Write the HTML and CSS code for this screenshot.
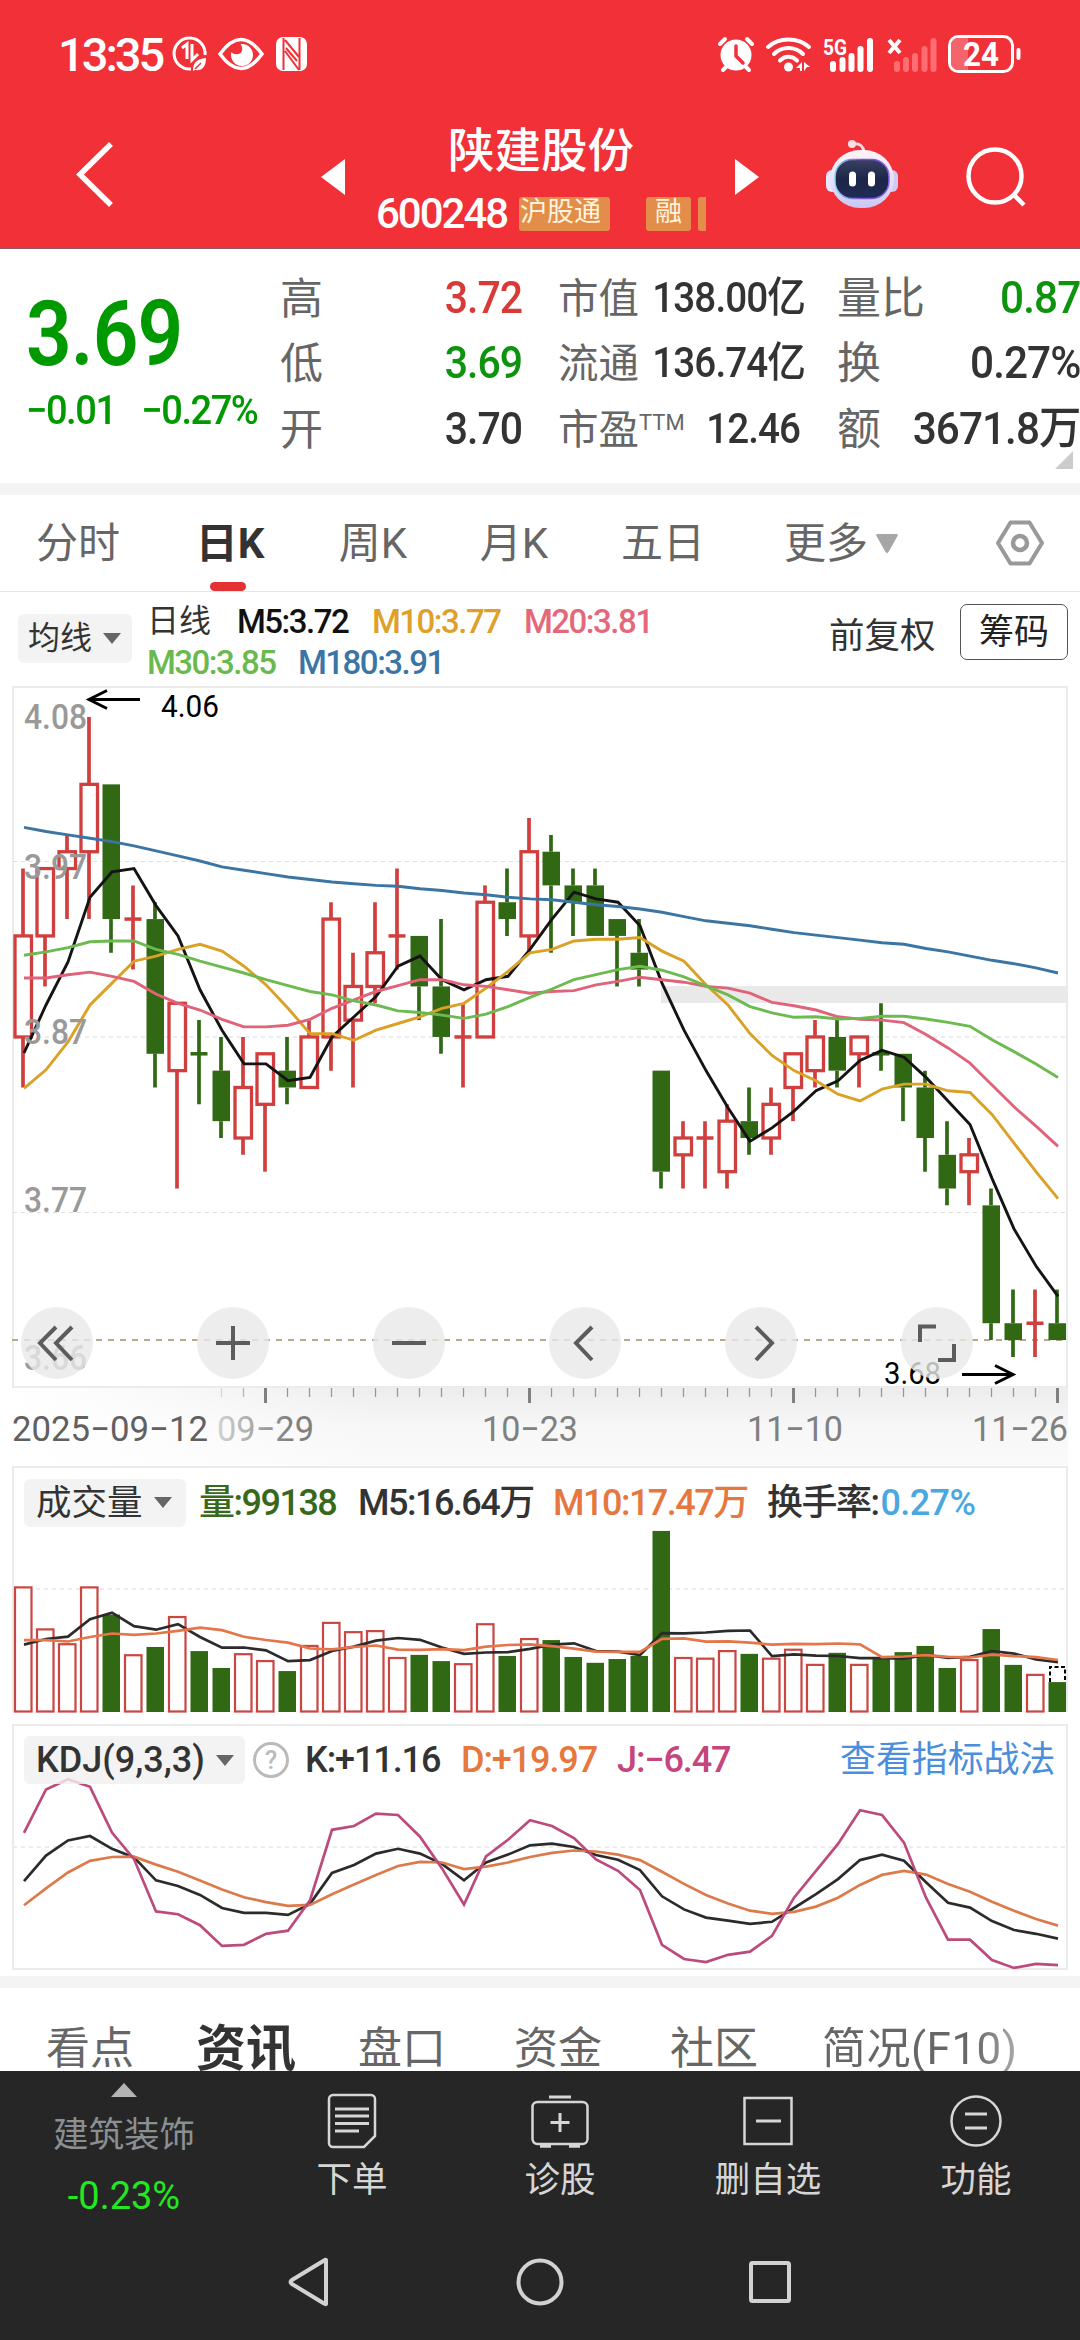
FILE: index.html
```html
<!DOCTYPE html>
<html lang="zh-CN">
<head>
<meta charset="utf-8">
<title>陕建股份 600248</title>
<link rel="stylesheet" href="styles.css">
</head>
<body>
<div class="screen">
  <header class="header">
    <div class="status">
      <div class="status-left">
        <span class="clock">13:35</span>
        <svg width="36" height="38" viewBox="0 0 36 38" fill="none" stroke="#fff" stroke-width="3">
          <path d="M33 20A15.500 15.500 0 1 0 19 34"/>
          <path d="M10 13l5-4v15M20 9v16l6-6"/>
          <path d="M21 36c0-9 4-12 13-13 0 9-4 13-11 12z" fill="#fff" stroke="none"/>
          <path d="M23 34l6-6" stroke="#f13038" stroke-width="1.500"/>
        </svg>
        <svg width="46" height="34" viewBox="0 0 46 34">
          <path d="M2 17C10 6 16 2.500 23 2.500S36 6 44 17C36 28 30 31.500 23 31.500S10 28 2 17z" fill="none" stroke="#fff" stroke-width="3.500"/>
          <path d="M24 7a11 11 0 1 1-11 11c0-1 .2-2 .5-3 2 3 8 3 10 0 1.500-3 .5-6-1-8z" fill="#fff"/>
        </svg>
        <svg width="31" height="34" viewBox="0 0 31 34">
          <rect x="0" y="0" width="31" height="34" rx="7" fill="#fff"/>
          <path d="M7.500 1v32M9 3l14 17M9 14l14 19M23.500 1v32" fill="none" stroke="#f13038" stroke-width="2"/>
          <path d="M10 11l11 13" fill="none" stroke="#f13038" stroke-width="2"/>
        </svg>
      </div>
      <div class="status-right">
        <svg width="36" height="36" viewBox="0 0 36 36">
          <circle cx="18" cy="19" r="15.500" fill="#fff"/>
          <path d="M2 8l5-5M34 8l-5-5M5 34l5-5M31 34l-5-5" stroke="#fff" stroke-width="4" stroke-linecap="round"/>
          <path d="M18 10v10l7 7" fill="none" stroke="#f13038" stroke-width="3.500" stroke-linecap="round"/>
        </svg>
        <svg width="46" height="36" viewBox="0 0 46 36">
          <g fill="none" stroke="#fff" stroke-width="4" stroke-linecap="round">
            <path d="M2 11c11-10 30-10 41 0"/><path d="M8 18c8-8 21-8 29 0"/><path d="M14 24.500c5-5 12-5 17 0"/>
          </g>
          <circle cx="22.500" cy="31" r="4.500" fill="#fff"/>
          <path d="M36 26v9h-2v-3h-4zM38 26l6 5h-3v0l-3 4z" fill="#fff"/>
        </svg>
        <svg width="52" height="37" viewBox="0 0 52 37">
          <text x="0" y="19" class="net" textLength="24" lengthAdjust="spacingAndGlyphs">5G</text>
          <g fill="#fff"><rect x="7" y="25" width="6" height="11" rx="3"/><rect x="16.500" y="21" width="6" height="15" rx="3"/><rect x="25.500" y="17" width="6" height="19" rx="3"/><rect x="34.500" y="10" width="6" height="26" rx="3"/><rect x="44" y="2" width="6" height="34" rx="3"/></g>
        </svg>
        <svg width="50" height="37" viewBox="0 0 50 37">
          <path d="M2 4l11 13M13 4L2 17" stroke="#fff" stroke-width="4"/>
          <g fill="#ff6d72"><rect x="7" y="25" width="6" height="11" rx="3"/><rect x="16" y="21" width="6" height="15" rx="3"/><rect x="25" y="17" width="6" height="19" rx="3"/><rect x="34.500" y="10" width="6" height="26" rx="3"/><rect x="43.500" y="2" width="6" height="34" rx="3"/></g>
        </svg>
        <svg width="73" height="38" viewBox="0 0 73 38">
          <rect x="1.500" y="1.500" width="63" height="35" rx="9" fill="none" stroke="#fff" stroke-width="3"/>
          <path d="M3 10a7 7 0 0 1 7-7h10v32H10a7 7 0 0 1-7-7z" fill="#f4656b"/>
          <rect x="68.500" y="13" width="4" height="12" rx="2" fill="#fff"/>
          <text x="33" y="31" text-anchor="middle" class="battery" textLength="36" lengthAdjust="spacingAndGlyphs">24</text>
        </svg>
      </div>
    </div>
    <div class="nav">
      <svg width="40" height="70" viewBox="0 0 40 70"><path d="M36 4L5 34.500 36 65" fill="none" stroke="#fff" stroke-width="5.500"/></svg>
      <svg width="24" height="36" viewBox="0 0 24 36"><path d="M24 0v36L0 18z" fill="#fff"/></svg>
      <div class="stock">
        <h1>陕建股份</h1>
        <div class="stock-meta"><span class="code">600248</span><span class="tag">沪股通</span><span class="tag tag-gap">融</span><span class="tag-cut"></span></div>
      </div>
      <svg width="24" height="36" viewBox="0 0 24 36"><path d="M0 0v36l24-18z" fill="#fff"/></svg>
      <svg width="72" height="70" viewBox="0 0 72 70">
        <defs>
          <linearGradient id="head" x1="0" y1="0" x2="0" y2="1"><stop offset="0" stop-color="#fff4f6"/><stop offset=".6" stop-color="#e2def8"/><stop offset="1" stop-color="#c9c6f2"/></linearGradient>
          <linearGradient id="rim" x1="0" y1="0" x2="1" y2="0"><stop offset="0" stop-color="#7fd8ee"/><stop offset=".5" stop-color="#7a4fd0"/><stop offset="1" stop-color="#8a62f0"/></linearGradient>
          <linearGradient id="face" x1="0" y1="0" x2="0" y2="1"><stop offset="0" stop-color="#3a4163"/><stop offset=".5" stop-color="#1d2647"/><stop offset="1" stop-color="#202b56"/></linearGradient>
        </defs>
        <path d="M26 5c7-1 11 1 12 8" fill="none" stroke="#f3d7e4" stroke-width="3"/><circle cx="26" cy="5" r="4" fill="#fbdfe5"/>
        <rect x="0" y="31" width="12" height="22" rx="6" fill="#e9e6fb"/><rect x="60" y="31" width="12" height="22" rx="6" fill="#cfcbf5"/>
        <rect x="4" y="11" width="64" height="58" rx="30" fill="url(#head)"/>
        <rect x="9" y="20.500" width="54" height="39" rx="17" fill="url(#face)" stroke="url(#rim)" stroke-width="1.500"/>
        <rect x="23" y="32.500" width="7" height="15" rx="3.500" fill="#fff"/><rect x="42" y="32.500" width="7" height="15" rx="3.500" fill="#fff"/>
      </svg>
      <svg width="60" height="60" viewBox="0 0 60 60" fill="none" stroke="#fff" stroke-width="4.500"><circle cx="29" cy="29" r="26.500"/><path d="M48 48l10 10"/></svg>
    </div>
  </header>

  <section class="quote">
    <div class="price"><strong>3.69</strong><p><span>−0.01</span><span>−0.27%</span></p></div>
    <dl class="col col-a">
      <div><dt>高</dt><dd class="up">3.72</dd></div><div><dt>低</dt><dd class="down">3.69</dd></div><div><dt>开</dt><dd>3.70</dd></div>
    </dl>
    <dl class="col col-b">
      <div><dt>市值</dt><dd>138.00亿</dd></div><div><dt>流通</dt><dd>136.74亿</dd></div><div><dt>市盈<sup>TTM</sup></dt><dd>12.46</dd></div>
    </dl>
    <dl class="col col-c">
      <div><dt>量比</dt><dd class="down">0.87</dd></div><div><dt>换</dt><dd>0.27%</dd></div><div><dt>额</dt><dd>3671.8万</dd></div>
    </dl>
    <i class="corner"></i>
  </section>

  <nav class="periods">
    <span>分时</span><span class="on">日K</span><span>周K</span><span>月K</span><span>五日</span>
    <span class="more">更多<svg width="22" height="19" viewBox="0 0 22 19"><path d="M1.500 0h19q2 0 1 2L12.500 18q-1.500 2-3 0L.5 2Q-.5 0 1.500 0z" fill="#a6a6a6"/></svg></span>
    <svg width="48" height="46" viewBox="0 0 48 46" fill="none" stroke="#999" stroke-linejoin="round"><path d="M14.500 2.500h19L46 23 33.500 43.500h-19L2 23z" stroke-width="4"/><circle cx="24" cy="23" r="7" stroke-width="4.500"/></svg>
  </nav>

  <section class="legend">
    <span class="pill pill-ma">均线<i class="caret"></i></span>
    <div class="ma">
      <div class="ma-row"><b class="day">日线</b><span class="m5">M5:3.72</span><span class="m10">M10:3.77</span><span class="m20">M20:3.81</span></div>
      <div class="ma-row ma-row2"><span class="m30">M30:3.85</span><span class="m180">M180:3.91</span></div>
    </div>
    <span class="adjust">前复权</span><span class="chips">筹码</span>
  </section>

  <svg id="kline" class="chart" width="1080" height="779" viewBox="0 686 1080 779"></svg>

  <section class="panel panel-vol">
    <svg id="volume" class="chart" width="1080" height="259" viewBox="0 1465 1080 259"></svg>
    <div class="panel-head vol-head">
      <span class="pill">成交量<i class="caret"></i></span><span class="g">量:99138</span><span>M5:16.64万</span><span class="o">M10:17.47万</span><span>换手率:<em>0.27%</em></span>
    </div>
  </section>
  <section class="panel panel-kdj">
    <svg id="kdj" class="chart" width="1080" height="252" viewBox="0 1724 1080 252"></svg>
    <div class="panel-head kdj-head">
      <span class="pill kdj-pill">KDJ(9,3,3)<i class="caret"></i></span><span class="help">?</span><span>K:+11.16</span><span class="o">D:+19.97</span><span class="p">J:−6.47</span><a>查看指标战法</a>
    </div>
  </section>

  <nav class="sections">
    <span>看点</span><span class="on">资讯</span><span>盘口</span><span>资金</span><span>社区</span><span class="last">简况(F10)</span>
  </nav>

  <footer class="dock">
    <div class="actions">
      <div class="sector"><i></i><span>建筑装饰</span><b>-0.23%</b></div>
      <div class="act"><svg width="50" height="56" viewBox="0 0 50 56" fill="none" stroke="#d6d6d6" stroke-width="2.500"><path d="M6 2h38a4 4 0 0 1 4 4v37L37 54H6a4 4 0 0 1-4-4V6a4 4 0 0 1 4-4z"/><path d="M8 16h34M8 23h34M8 30.500h34M8 38h24" stroke-width="3"/></svg><span>下单</span></div>
      <div class="act"><svg width="58" height="56" viewBox="0 0 58 56" fill="none" stroke="#d6d6d6" stroke-width="2.500"><rect x="1.500" y="9" width="55" height="42" rx="5"/><path d="M18 4h22M29 20v19M19.500 29.500h19" stroke-width="3"/><path d="M9 53h11M38 53h11" stroke-width="3.500"/></svg><span>诊股</span></div>
      <div class="act"><svg width="50" height="56" viewBox="0 0 50 56" fill="none" stroke="#d6d6d6" stroke-width="2.500"><rect x="1.500" y="5" width="47" height="46"/><path d="M13 28h25" stroke-width="3"/></svg><span>删自选</span></div>
      <div class="act"><svg width="52" height="56" viewBox="0 0 52 56" fill="none" stroke="#d6d6d6" stroke-width="2.500"><circle cx="26" cy="28" r="24.500"/><path d="M15 21h22M15 35h22" stroke-width="3"/></svg><span>功能</span></div>
    </div>
    <div class="system">
      <svg width="42" height="50" viewBox="0 0 42 50"><path d="M38 3.500v43q0 1.500-2 0L4 27q-3-2 0-4L36 3.500q2-1.500 2 0z" fill="none" stroke="#d2d2d2" stroke-width="4"/></svg>
      <svg width="48" height="50" viewBox="0 0 48 50"><circle cx="24" cy="25" r="21.500" fill="none" stroke="#d2d2d2" stroke-width="4"/></svg>
      <svg width="44" height="50" viewBox="0 0 44 50"><rect x="3" y="6" width="38" height="38" rx="1.500" fill="none" stroke="#d2d2d2" stroke-width="4"/></svg>
    </div>
  </footer>
</div>
<script src="charts.js"></script>
</body>
</html>
```

FILE: styles.css
```css
* { box-sizing: border-box; }
body { margin: 0; background: #fff; font-family: Roboto, "Noto Sans CJK SC", sans-serif; }
h1, p, dl, dd { margin: 0; }
svg { display: block; flex: none; }
i, em { font-style: normal; }
.screen { width: 1080px; height: 2340px; display: flex; flex-direction: column; overflow: hidden; color: #333; }
.screen > * { flex: none; }

.header { height: 249px; background: #f13038; color: #fff; border-bottom: 1px solid #8c5a66; }
.status { height: 109px; display: flex; justify-content: space-between; padding: 35px 59px 0 58px; }
.status svg { overflow: visible; }
.status-left, .status-right { display: flex; align-items: center; height: 38px; }
.clock { font-size: 47px; font-weight: 500; letter-spacing: -3px; width: 114px; }
.status-left svg:nth-of-type(2) { margin-left: 10px; }
.status-left svg:nth-of-type(3) { margin-left: 12px; }
.status-right svg + svg { margin-left: 11.500px; }
.net { font: 700 22px Roboto, sans-serif; fill: #fff; }
.battery { font: 700 33px Roboto, sans-serif; fill: #fff; }

.nav { height: 139px; display: grid; grid-template-columns: 321px 0 24px 390px 24px 38px 100px 69px 60px; }
.nav > svg:nth-of-type(1) { grid-column: 1 / 3; margin: 31px 0 0 75px; }
.nav > svg:nth-of-type(2) { grid-column: 3; margin-top: 50px; }
.nav > svg:nth-of-type(3) { grid-column: 5; margin-top: 50px; }
.nav > svg:nth-of-type(4) { grid-column: 7; margin: 30px 0 0 29px; }
.nav > svg:nth-of-type(5) { grid-column: 9; margin-top: 38px; }
.stock { grid-column: 4; padding-left: 31px; }
.stock h1 { font-size: 46.500px; font-weight: 500; line-height: 60px; height: 80px; padding: 12px 0 0 72px; }
.stock-meta { display: flex; align-items: center; height: 50px; }
.code { font-size: 42px; font-weight: 500; letter-spacing: -2px; width: 143px; margin-top: -2px; }
.tag { height: 34px; line-height: 31px; font-size: 27px; padding: 0 9px 0 1px; background: #e38d4b; color: #fff3dc; border-radius: 3px; }
.tag-gap { margin-left: 36px; padding: 0 9px; }
.tag-cut { width: 8px; height: 34px; margin-left: 7px; background: #e38d4b; border-radius: 3px 0 0 3px; }

.quote { position: relative; height: 246px; border-bottom: 12px solid #f4f4f4; display: grid; grid-template-columns: 280px 242px 278px 280px; }
.price { padding: 32px 0 0 26px; color: #009a00; }
.price strong { display: block; font-size: 91px; line-height: 106px; font-weight: 600; letter-spacing: -1px; transform: scaleX(.88); transform-origin: left; }
.price p { display: flex; gap: 27px; font-size: 40px; line-height: 46px; font-weight: 500; letter-spacing: -1.500px; margin-top: 1px; transform: scaleX(.95); transform-origin: left; white-space: nowrap; }
.col { padding-top: 16px; }
.col div { display: flex; justify-content: space-between; align-items: center; height: 65.500px; }
.col dt { font-size: 43px; line-height: 60px; padding-top: 2px; color: #666; white-space: nowrap; }
.col dd { font-size: 45px; line-height: 60px; font-weight: 500; letter-spacing: -1px; white-space: nowrap; transform: scaleX(.91); transform-origin: right; }
.col-b { padding-left: 36px; }
.col-b dt { font-size: 40.500px; }
.col-b dd { font-size: 42px; transform: scaleX(.92); }
.col-b sup { font-size: 22px; vertical-align: 14px; line-height: 0; }
.col-c { padding-left: 37px; }
.col-c dt { font-size: 44px; }
.col-c dd { transform: scaleX(.94); }
.col .up { color: #d83a37; } .col .down { color: #0d930d; }
.corner { position: absolute; right: 7px; bottom: 14px; border-left: 18px solid transparent; border-bottom: 18px solid #ccc; }

.periods { height: 97px; border-bottom: 1px solid #e6e6e6; display: grid; grid-template-columns: 156px 148px 138px 144px 154px 256px 48px; align-items: center; text-align: center; font-size: 42px; color: #666; }
.periods > span { height: 96px; line-height: 97px; position: relative; }
.periods .on { color: #333; font-weight: 700; }
.periods .on::after { content: ""; position: absolute; left: 54px; bottom: 0; width: 36px; height: 9px; border-radius: 5px; background: #e33134; }
.more { display: flex; align-items: center; padding-left: 44px; gap: 8px; }

.legend { height: 94px; display: flex; }
.pill { display: flex; align-items: center; background: rgba(240,240,240,.82); border-radius: 6px; color: #333; white-space: nowrap; }
.caret { border: 9px solid transparent; border-top: 11px solid #666; border-bottom: 0; margin-left: 11px; }
.pill-ma { width: 114px; height: 49px; margin: 22px 0 0 18px; padding-left: 10px; font-size: 32px; line-height: 47px; }
.ma { width: 697px; padding: 9px 0 0 15px; font-size: 33px; font-weight: 500; letter-spacing: -1.500px; }
.ma-row { display: grid; grid-template-columns: 90px 135px 152px 1fr; height: 41px; line-height: 41px; }
.ma-row2 { grid-template-columns: 151px 1fr; }
.day { font-size: 32px; font-weight: 400; letter-spacing: 0; }
.m5 { color: #111; } .m10 { color: #dfa02a; } .m20 { color: #e5687a; } .m30 { color: #6ab94f; } .m180 { color: #3a75a5; }
.adjust { width: 130px; margin-top: 21px; font-size: 35.500px; line-height: 46px; white-space: nowrap; }
.legend .chips { width: 108px; height: 56px; margin: 12px 0 0 1px; border: 1.500px solid #555; border-radius: 7px; font-size: 35px; line-height: 56px; text-align: center; color: #222; }

.chart text { font-family: Roboto, sans-serif; }
.panel { display: grid; }
.panel > * { grid-area: 1 / 1; }
.panel-head { display: grid; align-items: center; height: 48px; line-height: 48px; font-size: 36px; font-weight: 500; letter-spacing: -1.500px; white-space: nowrap; padding-left: 24px; }
.vol-head { margin-top: 13px; grid-template-columns: 175px 159px 195px 214px 1fr; }
.vol-head > span:not(.pill) { margin-top: 1px; }
.kdj-head { margin-top: 12px; grid-template-columns: 229px 52px 156px 156px 223px 1fr; }
.panel-head .pill { width: 162px; height: 48px; padding-left: 12px; font-size: 35.500px; line-height: 48px; font-weight: 400; letter-spacing: 0; }
.panel-head .kdj-pill { width: 221px; font-size: 36px; letter-spacing: 0; font-weight: 500; }
.g { color: #38691b; } .o { color: #e5773f; } .p { color: #c4467c; }
.panel-head em { color: #4ba8df; letter-spacing: -.6px; margin-left: 2px; }
.kdj-head > span:not(.pill):not(.help) { letter-spacing: -1.100px; }
.help { width: 36px; height: 36px; border: 3px solid #bbb; border-radius: 50%; color: #bbb; font-size: 25px; line-height: 31px; text-align: center; }
.panel-head .help { letter-spacing: 0; }
.panel-head a { color: #4b8edd; font-size: 35.900px; font-weight: 400; letter-spacing: 0; margin-top: -1px; }

.sections { height: 95px; border-top: 12px solid #f4f4f4; display: grid; grid-template-columns: 168px 156px 156px 156px 156px 1fr; text-align: center; font-size: 44px; line-height: 44px; padding-top: 39px; color: #666; overflow: hidden; white-space: nowrap; }
.sections span:first-child { padding-left: 12px; }
.sections .on { font-size: 50px; font-weight: 700; color: #333; }
.sections .last { text-align: left; padding-left: 30px; background: linear-gradient(90deg, #666 180px, #aaa 225px); background-clip: text; color: transparent; letter-spacing: .5px; }

.dock { height: 269px; background: #262626; color: #d6d6d6; }
.actions { height: 155px; display: grid; grid-template-columns: 248px repeat(4, 208px); }
.sector { display: flex; flex-direction: column; align-items: center; padding-top: 12px; }
.sector i { border: 13px solid transparent; border-bottom: 14px solid #b4b4b4; border-top: 0; }
.sector span { font-size: 35.500px; line-height: 50px; margin-top: 13px; color: #8a8f94; }
.sector b { font-size: 38px; line-height: 44px; margin-top: 14px; font-weight: 400; color: #22e822; }
.act { display: flex; flex-direction: column; align-items: center; padding-top: 22px; font-size: 35.500px; }
.act span { line-height: 50px; margin-top: 6px; }
.system { display: flex; padding: 31px 0 0 288px; }
.system svg + svg { margin-left: 186px; }
.system svg:last-child { margin-left: 184px; }
```

FILE: charts.js
```js
// Daily candles: [open/close top, body bottom, high, low, rising] in 0.01 yuan
const candles = [
  [393,387,397,384,1],[397,393,397,390,1],[398,397,399,394,1],[402,398,406,394,1],[402,394,402,392,0],
  [394,394,396,391,1],[394,386,395,384,0],[389,385,389,378,1],[386,386,388,383,0],[385,382,387,381,0],
  [384,381,387,380,1],[386,383,386,379,1],[385,384,387,383,0],[387,384,388,384,1],[394,387,395,385,1],
  [390,388,392,384,1],[392,390,395,389,1],[393,393,397,391,1],[393,390,393,388,0],[390,387,394,386,0],
  [387,387,389,384,1],[395,387,396,387,1],[395,394,397,393,0],[398,393,400,392,1],[398,396,399,392,0],
  [396,395,397,393,0],[396,393,397,393,0],[394,393,394,390,0],[392,391,394,390,0],[385,379,385,378,0],
  [381,380,382,378,1],[381,381,382,378,1],[382,379,383,378,1],[382,381,384,380,0],[383,381,384,380,1],
  [386,384,386,382,1],[387,385,388,384,1],[387,385,388,384,0],[387,386,387,384,1],[386,386,389,385,0],
  [386,384,386,382,0],[384,381,385,379,0],[380,378,382,377,0],[380,379,381,377,1],[377,370,378,369,0],
  [370,369,372,368,0],[370,370,372,368,1],[370,369,372,369,0]
];
const seed = {
  5: [386.05,388.9,391.45,395.3],
  10: [383.95,385.05,386.7,388.9,390.2,391.5,391.8,392.2,392.5],
  20: [390.5,390.5,390.7,390.85,390.6,390.3,389.55,389,388.6,388.05,387.6,387.6,387.7,388.05,388.7,389.2,389.7,390.05,390.4],
  30: [391.85,392.05,392.3,392.65,392.7,392.7,392.2,391.9,391.5,391.15,390.8,390.4,390.05,389.7,389.5,389.15,388.9,388.55,388.45,388.3,388.1,388.35,388.8,389.35,389.85,390.4,390.7,391,391.2]
};
const ma180 = [399.45,399.2,399,398.8,398.6,398.35,398.05,397.75,397.45,397.1,396.9,396.7,396.5,396.35,396.2,396.1,396,395.95,395.8,395.7,395.55,395.45,395.3,395.2,395.15,395,394.85,394.75,394.6,394.4,394.15,393.9,393.75,393.6,393.4,393.2,393.05,392.9,392.75,392.6,392.5,392.25,392.05,391.8,391.55,391.35,391.1,390.8];

const x = i => 23 + i * 22;
const y = p => 717 + (406 - p) * 16.84;
const average = (values, n, first) => values.map((_, i) =>
  i < first.length ? first[i] : values.slice(i - n + 1, i + 1).reduce((a, b) => a + b) / n);
const line = (values, scale, color, width) =>
  `<polyline fill="none" stroke="${color}" stroke-width="${width}" points="${values.map((v, i) => x(i) + 1 + ',' + scale(v).toFixed(1)).join(' ')}"/>`;
const label = (s, left, base, width, size, color, extra = '') =>
  `<text x="${left}" y="${base}" font-size="${size}" fill="${color}" textLength="${width}" lengthAdjust="spacingAndGlyphs" ${extra}>${s}</text>`;
const RED = '#d03f3d', GREEN = '#316813';

// Candlestick chart
let k = `<defs>
<linearGradient id="stripX"><stop offset="0" stop-color="#fff"/><stop offset=".13" stop-color="#fff" stop-opacity=".7"/><stop offset=".35" stop-color="#fff" stop-opacity="0"/></linearGradient>
<linearGradient id="stripY" x1="0" y1="0" x2="0" y2="1"><stop offset="0" stop-color="#ededed"/><stop offset=".5" stop-color="#f7f7f7"/><stop offset="1" stop-color="#fafafa"/></linearGradient>
<linearGradient id="fade" gradientUnits="userSpaceOnUse" x1="215" x2="290" y1="0" y2="0"><stop offset="0" stop-color="#d4d4d4"/><stop offset="1" stop-color="#808080"/></linearGradient></defs>
<rect x="12" y="1388" width="1056" height="78" fill="url(#stripY)"/><rect x="12" y="1388" width="1056" height="78" fill="url(#stripX)"/>
<path d="M13 687H1067V1387H13z" fill="none" stroke="#ebebeb" stroke-width="2"/>
<path d="M13 861.500H1066M13 1212.500H1066" stroke="#dedede" stroke-dasharray="4 4"/><path d="M13 1037H1066" stroke="#ececec" stroke-width="2" stroke-dasharray="4 4"/>
<rect x="661" y="986" width="407" height="17" fill="#e9e9e9"/>
<path d="M12 1340H1066" stroke="#b9a98a" stroke-width="2" stroke-dasharray="6 6"/>`;
candles.forEach(([top, bottom, high, low, up], i) => {
  const c = up ? RED : GREEN, a = y(top), b = y(bottom);
  k += `<path d="M${x(i)} ${y(high)}V${a}M${x(i)} ${b}V${y(low)}" stroke="${c}" stroke-width="3.700"/>`;
  if (top === bottom) k += `<path d="M${x(i) - 8.5} ${a}h17" stroke="${c}" stroke-width="3.500"/>`;
  else if (up) k += `<rect x="${x(i) - 8}" y="${a}" width="16.500" height="${b - a}" fill="none" stroke="${c}" stroke-width="3.300"/>`;
  else k += `<rect x="${x(i) - 8.5}" y="${a}" width="17.500" height="${b - a}" fill="${c}"/>`;
});
const closes = candles.map(c => c[4] ? c[0] : c[1]);
k += line(average(closes, 5, seed[5]), y, '#141414', 2.9);
k += line(average(closes, 10, seed[10]), y, '#dba126', 2.9);
k += line(average(closes, 20, seed[20]), y, '#e0637a', 2.9);
k += line(average(closes, 30, seed[30]), y, '#6dba50', 2.9);
k += line(ma180, y, '#3a75a3', 2.9);
[['4.08', 729], ['3.97', 879], ['3.87', 1044], ['3.77', 1212], ['3.66', 1370]].forEach(([s, b]) => {
  k += label(s, 24, b, 63, 35, '#999', 'font-weight="500"');
});
k += label('4.06', 161, 717, 58, 31, '#000') + label('3.68', 884, 1384, 57, 31, '#000');
k += `<path d="M140 699.500H90M107 690.500L89 699.500 107 708.500M962 1374.500H1012M995 1365.500L1013 1374.500 995 1383.500" fill="none" stroke="#000" stroke-width="3"/>`;
[57, 233, 409, 585, 761, 937].forEach(c => { k += `<circle cx="${c}" cy="1343" r="36" fill="#e8e8e8" fill-opacity=".8"/>`; });
k += `<g fill="none" stroke="#5c5c5c" stroke-width="4"><path d="M56 1327L40 1343 56 1360M72 1327L56 1343 72 1360"/><path d="M216 1343H250M233 1326V1360"/><path d="M392 1343H426"/><path d="M592 1327L576 1343 592 1360"/><path d="M756 1327L772 1343 756 1360"/><path d="M920 1342V1326.500H936M954 1344V1360H938"/></g>`;
for (let i = 9; i < 48; i++) {
  const major = [11, 23, 35, 47].includes(i);
  k += `<path d="M${x(i) + .5} 1388v${major ? 15 : 9}" stroke="${i === 9 ? '#d5d5d5' : i === 10 ? '#b5b5b5' : major ? '#808080' : '#999'}" stroke-width="${major ? 3 : 1.3}"/>`;
}
k += label('2025−09−12', 12, 1441, 196, 35, '#606060') + label('09−29', 217, 1441, 97, 35, 'url(#fade)');
[['10−23', 482], ['11−10', 747], ['11−26', 972]].forEach(([s, l]) => { k += label(s, l, 1441, 96, 35, '#808080'); });
document.getElementById('kline').innerHTML = k;

// Lower panels share one vertical scale
const py = v => 1450 + v / 2.904;
const volume = [399,521,564,399,478,596,572,485,584,633,593,613,642,569,502,529,526,604,595,613,622,506,598,549,552,601,618,607,598,235,604,606,584,592,606,580,624,589,624,605,587,569,633,610,520,624,653,674];
let v = `<path d="M13 1712V1467H1067V1712" fill="none" stroke="#ebebeb" stroke-width="2"/><path d="M13 1711.500H1067" stroke="#f0f0f0"/><path d="M36 1589H1066" stroke="#ececec" stroke-width="2" stroke-dasharray="4 4"/>`;
volume.forEach((t, i) => {
  const top = py(t);
  v += candles[i][4]
    ? `<rect x="${x(i) - 8}" y="${top}" width="16.500" height="${1711.5 - top}" fill="#fff" stroke="#c94643" stroke-width="2.200"/>`
    : `<rect x="${x(i) - 8.5}" y="${top}" width="17.500" height="${1712 - top}" fill="${GREEN}"/>`;
});
v += line(average(volume, 5, [565,549,542,491]), py, '#2b2b2b', 2.7);
v += line(average(volume, 10, [552,552,556,543,533,537,533,525,516]), py, '#e5764a', 2.7);
v += `<path d="M1050 1682V1667H1065V1682" fill="#fff" stroke="#000" stroke-width="2" stroke-dasharray="4 2.500"/>`;
document.getElementById('volume').innerHTML = v;

const K = [1252,1178,1134,1121,1158,1183,1250,1266,1292,1330,1344,1344,1350,1318,1228,1205,1172,1158,1172,1202,1250,1198,1175,1148,1143,1153,1176,1190,1220,1296,1334,1358,1367,1376,1370,1330,1290,1246,1191,1175,1193,1255,1315,1329,1368,1394,1405,1419];
const D = [1322,1273,1227,1193,1182,1181,1204,1225,1250,1276,1299,1313,1324,1321,1290,1262,1234,1208,1196,1198,1217,1210,1198,1182,1170,1163,1166,1175,1191,1225,1260,1292,1317,1338,1347,1341,1326,1300,1263,1234,1222,1233,1260,1283,1312,1338,1362,1381];
const J = [1112,986,956,978,1111,1188,1340,1348,1380,1440,1437,1405,1396,1308,1103,1092,1056,1060,1123,1215,1320,1180,1132,1075,1092,1127,1189,1222,1278,1437,1478,1487,1466,1457,1411,1300,1222,1144,1046,1060,1140,1300,1422,1422,1481,1504,1492,1496];
document.getElementById('kdj').innerHTML =
  `<path d="M13 1725H1067V1969H13z" fill="none" stroke="#ebebeb" stroke-width="2"/><path d="M13 1847H1066" stroke="#ececec" stroke-width="2" stroke-dasharray="4 4"/>` +
  line(K, py, '#2b2b2b', 2.7) + line(D, py, '#dd7a4c', 2.7) + line(J, py, '#bd4a7c', 2.7);
```
